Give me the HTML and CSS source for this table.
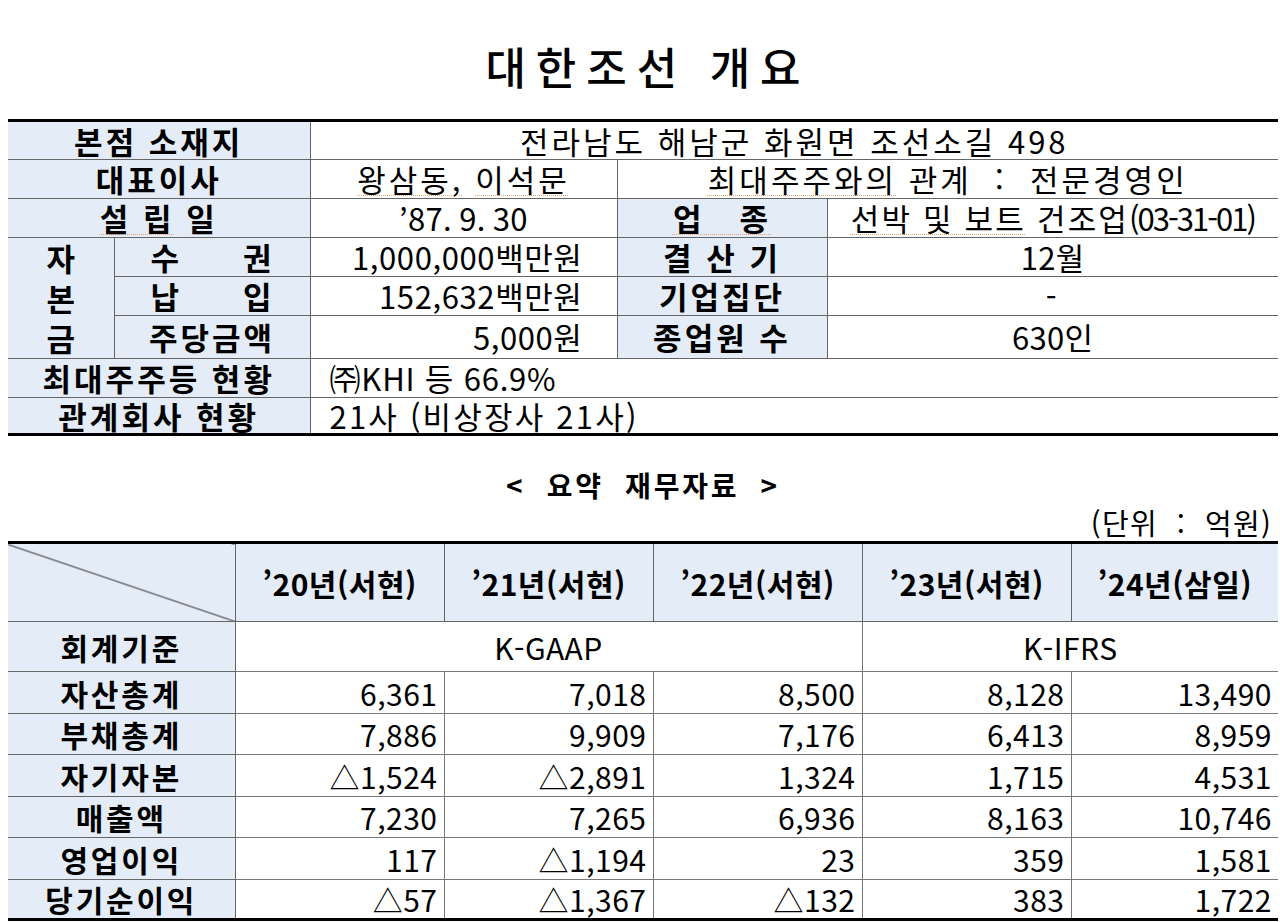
FILE: index.html
```html
<!DOCTYPE html>
<html lang="ko">
<head>
<meta charset="utf-8">
<title>대한조선 개요</title>
<link rel="stylesheet" href="styles.css">
</head>
<body>
<div class="page">
  <h1 class="title">대한조선 개요</h1>

  <table class="info">
    <colgroup>
      <col class="ic1"><col class="ic2"><col class="ic3"><col class="ic4"><col class="ic5">
    </colgroup>
    <tr class="r39">
      <th colspan="2" class="edge-l">본점 소재지</th>
      <td colspan="3" class="center edge-r">전라남도 해남군 화원면 조선소길 498</td>
    </tr>
    <tr class="r39">
      <th colspan="2" class="edge-l">대표이사</th>
      <td class="center"><span class="sp">왕삼동,</span> <span class="sp">이석문</span></td>
      <td colspan="2" class="center edge-r"><span class="sp">최대주주와의</span> 관계 &nbsp;: &nbsp;전문경영인</td>
    </tr>
    <tr class="r39">
      <th colspan="2" class="edge-l"><span class="sp">설 립</span> 일</th>
      <td class="center mix">’87. 9. 30</td>
      <th><span class="sp">업&nbsp;&nbsp; 종</span></th>
      <td class="center ind edge-r"><span class="sp">선박 및 보트</span> 건조업<span class="nar">(03-31-01)</span></td>
    </tr>
    <tr class="r39">
      <th rowspan="3" class="edge-l"><div class="vstack"><span>자</span><span>본</span><span>금</span></div></th>
      <th><div class="spread"><span>수</span><span>권</span></div></th>
      <td class="right">1,000,000백만원</td>
      <th>결 산 기</th>
      <td class="center mix edge-r">12월</td>
    </tr>
    <tr class="r38">
      <th><div class="spread"><span>납</span><span>입</span></div></th>
      <td class="right">152,632백만원</td>
      <th>기업집단</th>
      <td class="center edge-r">-</td>
    </tr>
    <tr class="r43">
      <th>주당금액</th>
      <td class="right">5,000원</td>
      <th>종업원 수</th>
      <td class="center mix edge-r">630인</td>
    </tr>
    <tr class="r39">
      <th colspan="2" class="edge-l">최대주주등 현황</th>
      <td colspan="3" class="left mix1 edge-r">㈜KHI 등 66.9%</td>
    </tr>
    <tr class="r37">
      <th colspan="2" class="edge-l">관계회사 현황</th>
      <td colspan="3" class="left mix2 edge-r">21사 (비상장사 21사)</td>
    </tr>
  </table>

  <h2 class="sub">&lt;&nbsp; 요약&nbsp; 재무자료&nbsp; &gt;</h2>
  <p class="unit">(단위&nbsp; :&nbsp; 억원)</p>

  <table class="fin">
    <colgroup>
      <col class="fc0"><col class="fc"><col class="fc"><col class="fc"><col class="fc"><col class="fc5">
    </colgroup>
    <thead>
      <tr class="rh">
        <th class="diag edge-l"></th>
        <th>’20년(서현)</th>
        <th>’21년(서현)</th>
        <th>’22년(서현)</th>
        <th>’23년(서현)</th>
        <th class="edge-r">’24년(삼일)</th>
      </tr>
    </thead>
    <tbody>
      <tr class="rs">
        <th class="edge-l">회계기준</th>
        <td colspan="3" class="center">K-GAAP</td>
        <td colspan="2" class="center edge-r">K-IFRS</td>
      </tr>
      <tr class="rd2">
        <th class="edge-l">자산총계</th>
        <td class="num">6,361</td><td class="num">7,018</td><td class="num">8,500</td><td class="num">8,128</td><td class="num edge-r">13,490</td>
      </tr>
      <tr class="rd1">
        <th class="edge-l">부채총계</th>
        <td class="num">7,886</td><td class="num">9,909</td><td class="num">7,176</td><td class="num">6,413</td><td class="num edge-r">8,959</td>
      </tr>
      <tr class="rd2">
        <th class="edge-l">자기자본</th>
        <td class="num">△1,524</td><td class="num">△2,891</td><td class="num">1,324</td><td class="num">1,715</td><td class="num edge-r">4,531</td>
      </tr>
      <tr class="rd1">
        <th class="edge-l">매출액</th>
        <td class="num">7,230</td><td class="num">7,265</td><td class="num">6,936</td><td class="num">8,163</td><td class="num edge-r">10,746</td>
      </tr>
      <tr class="rd2">
        <th class="edge-l">영업이익</th>
        <td class="num">117</td><td class="num">△1,194</td><td class="num">23</td><td class="num">359</td><td class="num edge-r">1,581</td>
      </tr>
      <tr class="rd0">
        <th class="edge-l">당기순이익</th>
        <td class="num">△57</td><td class="num">△1,367</td><td class="num">△132</td><td class="num">383</td><td class="num edge-r">1,722</td>
      </tr>
    </tbody>
  </table>
</div>
</body>
</html>
```

FILE: styles.css
```css
* { box-sizing: border-box; }
html, body { margin: 0; padding: 0; background: #ffffff; }
body {
  font-family: "Noto Sans CJK KR", "Noto Sans", sans-serif;
  color: #000;
}
.page { width: 1280px; padding: 0 2px 0 8px; }

.title {
  margin: 0 0 31px 0;
  padding: 44px 0 0 10px;
  height: 88px;
  font-size: 44px;
  line-height: 44px;
  font-weight: 500;
  letter-spacing: 10px;
  text-align: center;
}

table {
  border-collapse: collapse;
  table-layout: fixed;
  width: 1270px;
}
th, td {
  padding: 0;
  vertical-align: middle;
  border: 1px solid #666;
  white-space: nowrap;
}
th { background: #e4ecf7; font-weight: 700; text-align: center; }
td { background: #fff; font-weight: 400; }
.edge-l { border-left: none; }
.edge-r { border-right: none; }
.center { text-align: center; }
.right { text-align: right; padding-right: 34px; }
.left { text-align: left; padding-left: 19px; }

.sp {
  text-decoration: underline dotted #e9a36c;
  text-decoration-thickness: 1px;
  text-underline-offset: 3px;
}

/* info table */
.info { border-top: 3px solid #000; border-bottom: 3px solid #000; }
.info th, .info td { font-size: 31px; line-height: 32px; letter-spacing: 3px; }
.info td.right { letter-spacing: 0.6px; }
.info td.mix { letter-spacing: 0.3px; }
.info td.mix1 { letter-spacing: 0.8px; }
.info td.mix2 { letter-spacing: 2.2px; }
.info td.ind { letter-spacing: 2.2px; }
.info .nar { letter-spacing: -2px; }
.ic1 { width: 106px; }
.ic2 { width: 196px; }
.ic3 { width: 307px; }
.ic4 { width: 210px; }
.ic5 { width: 451px; }
.r39 { height: 39px; }
.r38 { height: 38px; }
.r43 { height: 43px; }
.r37 { height: 37px; }
.spread {
  display: flex;
  justify-content: space-between;
  padding: 0 38px 0 36px;
  letter-spacing: 0;
}
.vstack {
  display: flex;
  flex-direction: column;
  height: 120px;
  line-height: 40px;
  letter-spacing: 0;
}

/* section headings */
.sub {
  margin: 34px 0 0 0;
  font-size: 28px;
  line-height: 30px;
  font-weight: 700;
  letter-spacing: 2.8px;
  text-align: center;
}
.unit {
  margin: 7px 0 0 0;
  padding-right: 6px;
  font-size: 29px;
  line-height: 30px;
  letter-spacing: 1.3px;
  text-align: right;
}

/* financial table */
.fin { margin-top: 4px; border-top: 3px solid #000; border-bottom: 3px solid #000; }
.fin th, .fin td { font-size: 30px; line-height: 32px; letter-spacing: 0.5px; }
.fin tbody th { letter-spacing: 2.8px; }
.fin td { border-color: #777; }
.fc0 { width: 227px; }
.fc { width: 209px; }
.fc5 { width: 207px; }
.rh { height: 79px; }
.rs { height: 50px; }
.rd1 { height: 41px; }
.rd2 { height: 42px; }
.rd0 { height: 40px; }
.num { text-align: right; padding-right: 6px; }
.diag {
  background: linear-gradient(to top right, #e4ecf7 calc(50% - 1px), #333 50%, #e4ecf7 calc(50% + 1px));
}
```
